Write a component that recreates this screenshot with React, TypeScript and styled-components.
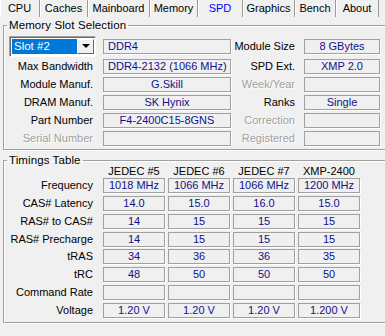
import { FC, Fragment } from "react";

import styled, { createGlobalStyle } from "styled-components";

type TTab = {
  label: string;
  width: number;
};

type TSlotRow = {
  label: string;
  value: string;
  alignLeft?: boolean;
  disabled?: boolean;
  rightLabel: string;
  rightValue: string;
  rightDisabled?: boolean;
};

type TTimingRow = {
  label: string;
  values: string[];
};

const GlobalStyle = createGlobalStyle`
  html, body {
    margin: 0;
    padding: 0;
    overflow: hidden;
    background: #f0f0f0;
  }
  body {
    font-family: "Liberation Sans", Arial, sans-serif;
    font-size: 11px;
    color: #000;
  }
`;

const Window = styled.div`
  width: 385px;
  height: 336px;
  background: #f0f0f0;
  overflow: hidden;
`;

const TabBar = styled.div`
  display: flex;
  height: 17px;
`;

const Tab = styled.div<{ $active?: boolean; $width: number }>`
  box-sizing: border-box;
  width: ${(p) => p.$width}px;
  height: 17px;
  line-height: 16px;
  text-align: center;
  border-right: 1px solid #9a9a9a;
  box-shadow: inset 1px 0 0 #ffffff;
  color: ${(p) => (p.$active ? "#0000ff" : "#000")};
  white-space: nowrap;
`;

const Panel = styled.div`
  display: flex;
  flex-direction: column;
  padding-left: 3px;
  width: 392px;
`;

const Group = styled.fieldset<{ $top: number; $padTop: number; $padBottom: number }>`
  margin: ${(p) => p.$top}px 0 0 0;
  padding: ${(p) => p.$padTop}px 0 ${(p) => p.$padBottom}px 5px;
  border: 1px solid #a0a0a0;
  box-shadow: inset 1px 1px 0 #ffffff, 1px 1px 0 #ffffff;
  min-width: 0;
`;

const Legend = styled.legend`
  padding: 0 2px;
  margin-left: -2px;
  height: 12px;
  line-height: 12px;
  font-size: 11.5px;
  letter-spacing: 0.1px;
`;

const SlotGrid = styled.div`
  display: grid;
  grid-template-columns: 94px 128px 73px 76px;
  grid-template-rows: 20px repeat(5, 15px);
  row-gap: 3px;
  align-items: center;
`;

const Label = styled.div<{ $disabled?: boolean; $pad: number }>`
  text-align: right;
  padding-right: ${(p) => p.$pad}px;
  line-height: 15px;
  white-space: nowrap;
  color: ${(p) => (p.$disabled ? "#a0a0a0" : "#000")};
  text-shadow: ${(p) => (p.$disabled ? "1px 1px 0 #ffffff" : "none")};
`;

const Field = styled.div<{ $left?: boolean }>`
  box-sizing: border-box;
  height: 15px;
  line-height: 13px;
  border: 1px solid #a0a0a0;
  box-shadow: 1px 1px 0 #ffffff;
  color: #10108a;
  text-align: ${(p) => (p.$left ? "left" : "center")};
  padding-left: ${(p) => (p.$left ? "4px" : "0")};
  white-space: nowrap;
  overflow: hidden;
`;

const Combo = styled.div`
  box-sizing: border-box;
  display: flex;
  width: 87px;
  height: 21px;
  padding: 2px 1px 2px 2px;
  background: #ffffff;
  border-top: 1px solid #a0a0a0;
  border-left: 1px solid #a0a0a0;
  border-right: 1px solid #ffffff;
  border-bottom: 1px solid #ffffff;
  box-shadow: inset 1px 1px 0 #696969;
`;

const ComboValue = styled.div`
  flex: 1;
  background: #0078d7;
  color: #ffffff;
  line-height: 15px;
  padding-left: 2px;
  font-size: 11.5px;
`;

const ComboButton = styled.div`
  box-sizing: border-box;
  width: 17px;
  display: flex;
  align-items: center;
  justify-content: center;
  background: #f0f0f0;
  border-top: 1px solid #ffffff;
  border-left: 1px solid #ffffff;
  border-right: 1px solid #696969;
  border-bottom: 1px solid #696969;
`;

const Arrow = styled.div`
  width: 0;
  height: 0;
  border-left: 4px solid transparent;
  border-right: 4px solid transparent;
  border-top: 4px solid #000;
`;

const TimingGrid = styled.div`
  display: grid;
  grid-template-columns: 91px repeat(4, 62px);
  grid-template-rows: 9px repeat(8, 15px);
  column-gap: 3px;
  row-gap: 2.9px;
  align-items: center;
`;

const Header = styled.div`
  text-align: center;
  line-height: 9px;
  padding-top: 1px;
  white-space: nowrap;
`;

const tabs: TTab[] = [
  { label: "CPU", width: 40 },
  { label: "Caches", width: 48 },
  { label: "Mainboard", width: 62 },
  { label: "Memory", width: 48 },
  { label: "SPD", width: 45 },
  { label: "Graphics", width: 52 },
  { label: "Bench", width: 41 },
  { label: "About", width: 43 },
];

const slotRows: TSlotRow[] = [
  {
    label: "Max Bandwidth",
    value: "DDR4-2132 (1066 MHz)",
    alignLeft: true,
    rightLabel: "SPD Ext.",
    rightValue: "XMP 2.0",
  },
  {
    label: "Module Manuf.",
    value: "G.Skill",
    rightLabel: "Week/Year",
    rightValue: "",
    rightDisabled: true,
  },
  {
    label: "DRAM Manuf.",
    value: "SK Hynix",
    rightLabel: "Ranks",
    rightValue: "Single",
  },
  {
    label: "Part Number",
    value: "F4-2400C15-8GNS",
    rightLabel: "Correction",
    rightValue: "",
    rightDisabled: true,
  },
  {
    label: "Serial Number",
    value: "",
    disabled: true,
    rightLabel: "Registered",
    rightValue: "",
    rightDisabled: true,
  },
];

const headers = ["JEDEC #5", "JEDEC #6", "JEDEC #7", "XMP-2400"];

const timingRows: TTimingRow[] = [
  { label: "Frequency", values: ["1018 MHz", "1066 MHz", "1066 MHz", "1200 MHz"] },
  { label: "CAS# Latency", values: ["14.0", "15.0", "16.0", "15.0"] },
  { label: "RAS# to CAS#", values: ["14", "15", "15", "15"] },
  { label: "RAS# Precharge", values: ["14", "15", "15", "15"] },
  { label: "tRAS", values: ["34", "36", "36", "35"] },
  { label: "tRC", values: ["48", "50", "50", "50"] },
  { label: "Command Rate", values: ["", "", "", ""] },
  { label: "Voltage", values: ["1.20 V", "1.20 V", "1.20 V", "1.200 V"] },
];

const App: FC = () => {
  return (
    <>
      <GlobalStyle />
      <Window>
        <TabBar>
          {tabs.map((tab) => (
            <Tab key={tab.label} $width={tab.width} $active={tab.label === "SPD"}>
              {tab.label}
            </Tab>
          ))}
        </TabBar>
        <Panel>
          <Group $top={2} $padTop={5} $padBottom={3}>
            <Legend>Memory Slot Selection</Legend>
            <SlotGrid>
              <Combo>
                <ComboValue>Slot #2</ComboValue>
                <ComboButton>
                  <Arrow />
                </ComboButton>
              </Combo>
              <Field $left>DDR4</Field>
              <Label $pad={9}>Module Size</Label>
              <Field>8 GBytes</Field>
              {slotRows.map((row) => (
                <Fragment key={row.label}>
                  <Label $pad={10} $disabled={row.disabled}>
                    {row.label}
                  </Label>
                  <Field $left={row.alignLeft}>{row.value}</Field>
                  <Label $pad={9} $disabled={row.rightDisabled}>
                    {row.rightLabel}
                  </Label>
                  <Field>{row.rightValue}</Field>
                </Fragment>
              ))}
            </SlotGrid>
          </Group>
          <Group $top={4} $padTop={0} $padBottom={4}>
            <Legend>Timings Table</Legend>
            <TimingGrid>
              <div />
              {headers.map((h) => (
                <Header key={h}>{h}</Header>
              ))}
              {timingRows.map((row) => (
                <Fragment key={row.label}>
                  <Label $pad={7}>{row.label}</Label>
                  {row.values.map((v, i) => (
                    <Field key={i}>{v}</Field>
                  ))}
                </Fragment>
              ))}
            </TimingGrid>
          </Group>
        </Panel>
      </Window>
    </>
  );
};

export default App;
